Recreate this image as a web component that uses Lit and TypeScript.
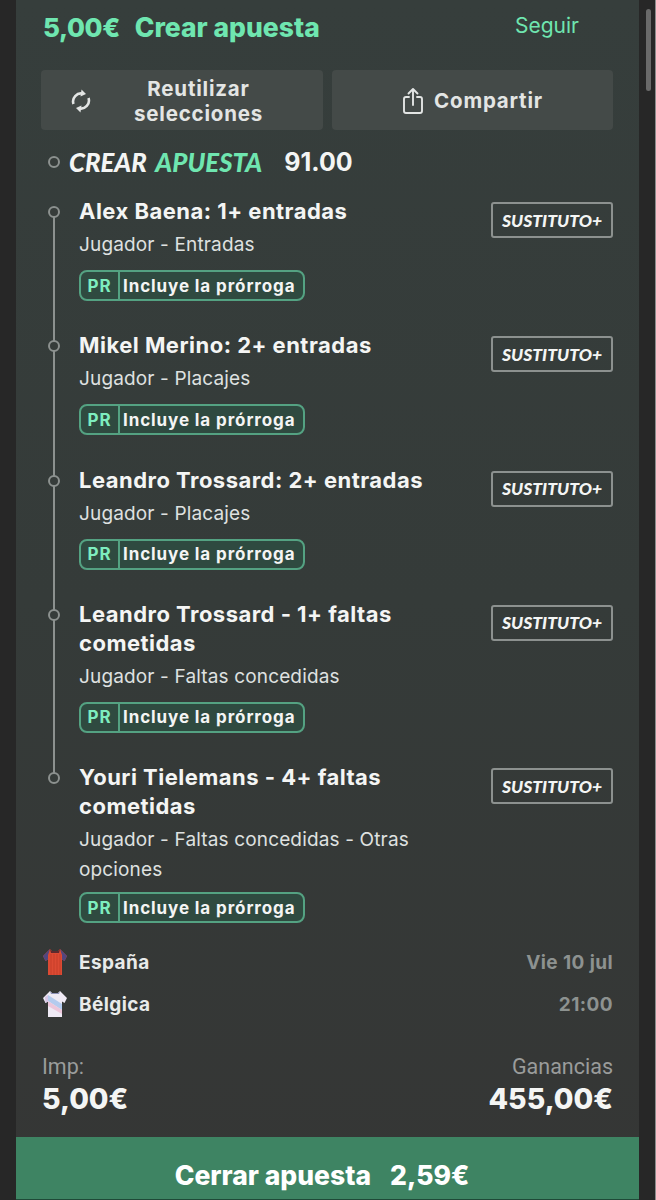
import { LitElement, html, css, svg } from "lit";
import { customElement } from "lit/decorators.js";

interface Selection {
  title: string;
  sub: string;
  wraps?: boolean;
}

const SELECTIONS: Selection[] = [
  { title: "Alex Baena: 1+ entradas", sub: "Jugador - Entradas" },
  { title: "Mikel Merino: 2+ entradas", sub: "Jugador - Placajes" },
  { title: "Leandro Trossard: 2+ entradas", sub: "Jugador - Placajes" },
  { title: "Leandro Trossard - 1+ faltas cometidas", sub: "Jugador - Faltas concedidas" },
  { title: "Youri Tielemans - 4+ faltas cometidas", sub: "Jugador - Faltas concedidas - Otras opciones", wraps: true },
];

const refreshIcon = svg`<svg class="icon" width="20" height="26" viewBox="0 0 20 26" fill="none" stroke="#e3e5e4" stroke-width="2.600">
  <path d="M2.500 16A8 8 0 0 1 12 5.700"/>
  <path d="M17.500 10A8 8 0 0 1 8 20.300"/>
  <path d="M10.500 1.500 15 6l-5.500 2.500z" fill="#e3e5e4" stroke="none"/>
  <path d="M9.500 24.500 5 20l5.500-2.500z" fill="#e3e5e4" stroke="none"/>
</svg>`;

const shareIcon = svg`<svg class="icon" width="22" height="28" viewBox="0 0 22 28" fill="none" stroke="#e3e5e4" stroke-width="1.900" stroke-linecap="round" stroke-linejoin="round">
  <path d="M7 10H4a2 2 0 0 0-2 2v12a2 2 0 0 0 2 2h14a2 2 0 0 0 2-2V12a2 2 0 0 0-2-2h-3"/>
  <path d="M11 18V2M6.500 6.500 11 2l4.500 4.500"/>
</svg>`;

const spainShirt = svg`<svg class="shirt" width="26" height="28" viewBox="0 0 26 28">
  <path d="M8 1 1 8l2.500 5 2.500-1.500V27h14V11.500l2.500 1.500L25 8l-7-7-2 2h-6z" fill="#dc4a33"/>
  <path d="M8 1 1 8l2.500 5 2.500-1.500V7zM18 1l7 7-2.500 5-2.500-1.500V7z" fill="#51467f"/>
  <path d="M8 1l2 2h6l2-2-1 4H9z" fill="#5e2a2e"/>
  <path d="M9 6v21M12 6v21M15 6v21M18 6v21" stroke="#c63f2b" stroke-width="1"/>
</svg>`;

const belgiumShirt = svg`<svg class="shirt" width="26" height="28" viewBox="0 0 26 28">
  <path d="M8 1 1 8l2.500 5 2.500-1.500V27h14V11.500l2.500 1.500L25 8l-7-7-2 2h-6z" fill="#efeaf5"/>
  <path d="M6 5l14 9v6L6 11z" fill="#b4cbee"/>
  <path d="M6 11l14 9v4L6 16z" fill="#ecc6da"/>
  <path d="M3 7 6 5v6.500l-2.500 1.500z" fill="#d8c6e6"/>
  <path d="M8 1l2 2h6l2-2-1 3H9z" fill="#8d92b8"/>
</svg>`;

@customElement("app-root")
export class AppRoot extends LitElement {
  static styles = css`
    :host {
      display: block;
      box-sizing: border-box;
      width: 656px;
      height: 1200px;
      overflow: hidden;
      position: relative;
      background: #272727;
      border-right: 1px solid #8c8c8c;
      font-family: Inter, "Liberation Sans", sans-serif;
      color: #f4f5f4;
    }

    .panel {
      box-sizing: border-box;
      width: 623px;
      height: 1199px;
      margin-left: 16px;
      display: flex;
      flex-direction: column;
      background: linear-gradient(180deg, #363e3c 0%, #353b39 50%, #353635 100%);
    }

    .scrollbar {
      position: absolute;
      left: 646px;
      top: 9px;
      width: 5px;
      height: 82px;
      border-radius: 3px;
      background: #6a6a6a;
    }

    .top {
      height: 54px;
      padding: 0 34px 0 27px;
      display: flex;
      align-items: center;
      color: #6fe6b0;
      font-weight: 800;
      font-size: 26.500px;
    }
    .top .stake { margin-right: 15px; font-size: 26px; letter-spacing: -0.400px; }
    .top .follow {
      margin-left: auto;
      font-weight: 400;
      font-size: 21px;
      margin-top: -3px;
      margin-right: 26px;
    }

    .actions {
      display: grid;
      grid-template-columns: 282px 281px;
      gap: 9px;
      margin: 16px 0 0 25px;
    }
    .action {
      box-sizing: border-box;
      height: 60px;
      padding-top: 1px;
      border-radius: 4px;
      background: #444a48;
      display: flex;
      align-items: center;
      justify-content: center;
      color: #e3e5e4;
      font-weight: 700;
      font-size: 20.500px;
      letter-spacing: 0.800px;
      line-height: 25px;
      text-align: center;
    }
    .action.reuse { padding: 1px 17px 0 30px; justify-content: flex-start; }
    .action.reuse .label { flex: 1; padding: 0 30px; }
    .action.share { gap: 10px; }
    .icon { flex: none; }

    .odds-head {
      height: 30px;
      margin: 17px 0 0 32px;
      display: flex;
      align-items: center;
      font-weight: 700;
      font-size: 25px;
    }
    .brand {
      font-family: Lato, sans-serif;
      font-style: italic;
      font-weight: 900;
      font-size: 25.750px;
      margin-left: 9px;
    }
    .brand em { color: #6fe6b0; margin-left: 3px; }
    .odds-head .odds { margin-left: 22px; }

    .dot {
      box-sizing: border-box;
      width: 12px;
      height: 12px;
      border-radius: 50%;
      border: 2px solid #8c918f;
      background: #363c3a;
      flex: none;
    }

    .list { margin: 20px 0 0 0; }
    .item {
      position: relative;
      padding: 0 26px 30.330px 63px;
      display: flex;
      justify-content: space-between;
    }
    .item:last-child { padding-bottom: 0; }
    .item::before {
      content: "";
      position: absolute;
      left: 37px;
      top: 15px;
      bottom: -15px;
      width: 2px;
      background: #8c918f;
    }
    .item:last-child::before { display: none; }
    .item .dot {
      position: absolute;
      left: 32px;
      top: 9px;
    }
    .body { width: 400px; }
    .title {
      font-weight: 700;
      font-size: 22px;
      letter-spacing: 0.480px;
      line-height: 29px;
    }
    .sub {
      margin-top: 4px;
      font-size: 19px;
      letter-spacing: 0.150px;
      line-height: 30px;
      color: #dfe1e0;
    }
    .chip {
      box-sizing: border-box;
      margin-top: 10px;
      width: 226px;
      height: 31px;
      display: flex;
      align-items: center;
      border: 2px solid #54a282;
      border-radius: 8px;
      background: #2f4a40;
      font-weight: 700;
      font-size: 17px;
      letter-spacing: 0.900px;
    }
    .item.wraps .chip { margin-top: 7px; }
    .chip .pr {
      width: 37px;
      height: 100%;
      flex: none;
      display: flex;
      align-items: center;
      justify-content: center;
      color: #7eedbf;
      border-right: 2px solid #54a282;
    }
    .chip .txt { margin-left: 3px; white-space: nowrap; }

    .badge {
      box-sizing: border-box;
      width: 122px;
      height: 36px;
      margin-top: 5px;
      display: flex;
      align-items: center;
      justify-content: center;
      border: 2px solid #8c918f;
      border-radius: 3px;
      font-family: Lato, sans-serif;
      font-style: italic;
      font-weight: 900;
      font-size: 17.500px;
      flex: none;
    }

    .match {
      margin: 18px 26px 0 25px;
      display: grid;
      grid-template-columns: 38px 1fr auto;
      grid-auto-rows: 42px;
      align-items: center;
      font-weight: 700;
      font-size: 19px;
      letter-spacing: 0.400px;
      color: #e9ebea;
    }
    .shirt { display: block; margin-left: 1px; }
    .when { color: #8d9290; justify-self: end; }

    .totals {
      margin: 28px 26px 0 26px;
      display: grid;
      grid-template-columns: 1fr auto;
    }
    .totals .lbl {
      font-family: Roboto, sans-serif;
      font-size: 21.500px;
      line-height: 28px;
      color: #9a9c9b;
    }
    .totals .amt {
      margin-top: 0;
      font-weight: 800;
      font-size: 28.500px;
      line-height: 36px;
    }
    .right { text-align: right; }

    .cashout {
      margin-top: auto;
      box-sizing: border-box;
      height: 62px;
      display: flex;
      align-items: center;
      justify-content: center;
      gap: 19px;
      background: #3e8463;
      color: #fff;
      font-weight: 800;
      font-size: 26.500px;
      padding: 14px 11px 0 0;
    }
    .line {
      position: absolute;
      left: 16px;
      bottom: 0;
      width: 623px;
      height: 1px;
      background: #1f4a38;
    }
  `;

  private renderSelection(s: Selection) {
    return html`
      <div class="item ${s.wraps ? "wraps" : ""}">
        <span class="dot"></span>
        <div class="body">
          <div class="title">${s.title}</div>
          <div class="sub">${s.sub}</div>
          <div class="chip">
            <span class="pr">PR</span>
            <span class="txt">Incluye la prórroga</span>
          </div>
        </div>
        <div class="badge">SUSTITUTO+</div>
      </div>
    `;
  }

  render() {
    return html`
      <div class="panel">
        <div class="top">
          <span class="stake">5,00€</span>
          <span>Crear apuesta</span>
          <span class="follow">Seguir</span>
        </div>
        <div class="actions">
          <div class="action reuse">${refreshIcon}<span class="label">Reutilizar selecciones</span></div>
          <div class="action share">${shareIcon}<span>Compartir</span></div>
        </div>
        <div class="odds-head">
          <span class="dot"></span>
          <span class="brand">CREAR <em>APUESTA</em></span>
          <span class="odds">91.00</span>
        </div>
        <div class="list">${SELECTIONS.map((s) => this.renderSelection(s))}</div>
        <div class="match">
          ${spainShirt}<span>España</span><span class="when">Vie 10 jul</span>
          ${belgiumShirt}<span>Bélgica</span><span class="when">21:00</span>
        </div>
        <div class="totals">
          <div class="lbl">Imp:</div>
          <div class="lbl right">Ganancias</div>
          <div class="amt">5,00€</div>
          <div class="amt right">455,00€</div>
        </div>
        <div class="cashout"><span>Cerrar apuesta</span><span>2,59€</span></div>
      </div>
      <div class="scrollbar"></div>
      <div class="line"></div>
    `;
  }
}
